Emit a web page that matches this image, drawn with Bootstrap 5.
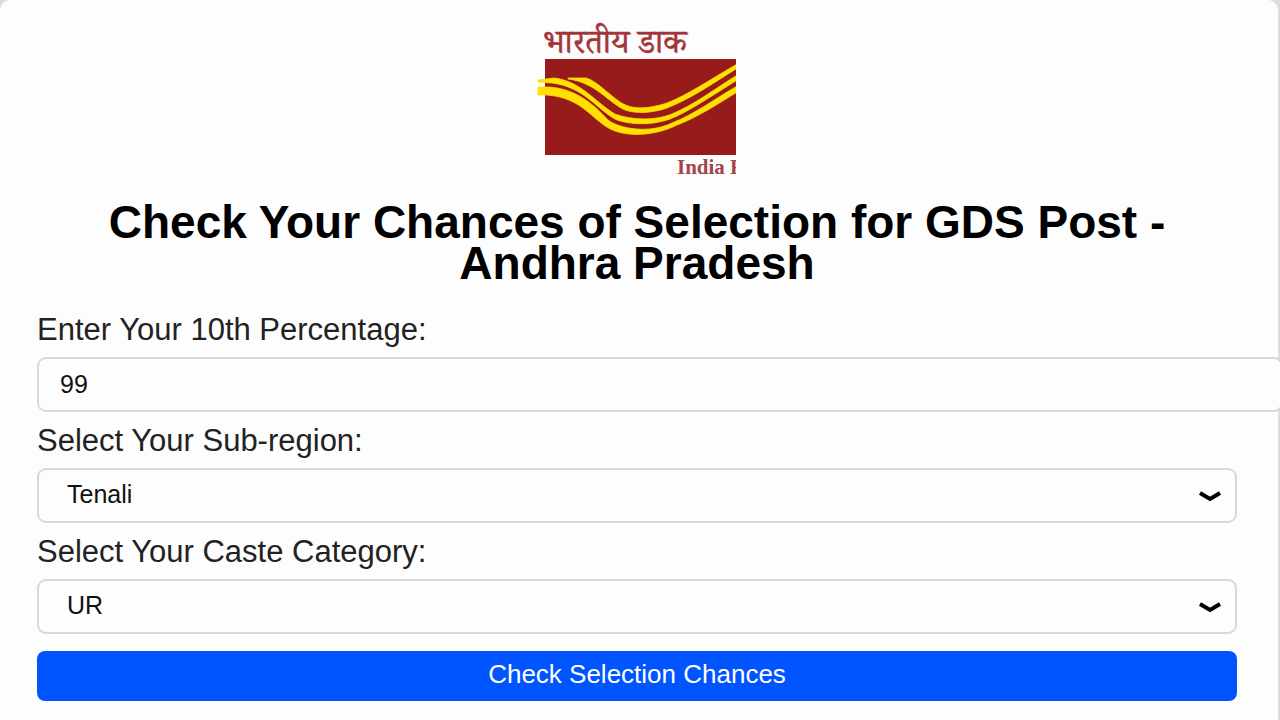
<!DOCTYPE html>
<html lang="en">
<head>
<meta charset="utf-8">
<meta name="viewport" content="width=device-width, initial-scale=1">
<title>GDS Post Selection Chances</title>
<link rel="stylesheet" href="https://cdn.jsdelivr.net/npm/bootstrap@5.3.0/dist/css/bootstrap.min.css">
<style>
body { background: #dcdcdc; font-family: "Liberation Sans", Arial, sans-serif; color: #222; }
.panel { background: #fdfdfd; border-radius: 10px 10px 0 0; min-height: 100vh; margin-right: 2px; padding: 28px 41px 19px 37px; }
.logo { width: 200px; height: 148px; overflow: visible; }
h1 { font-size: 46px; line-height: 41px; font-weight: 700; color: #000; margin: 26px 0 29px; }
.form-label { display: block; font-size: 31px; line-height: 34px; margin: 0 0 10px; }
.field { height: 55px; font-size: 25px; line-height: 30px; color: #111; border: 2px solid #d8d8d8; border-radius: 9px; background-color: #fdfdfd; margin-bottom: 12px; }
/* the text box keeps its padding outside its width, so it runs past the panel */
.field.score { box-sizing: content-box; height: 31px; padding: 10px 21px; }
.form-select.field { padding: 8px 60px 12px 28px; background-position: right 13px center; background-size: 24px 24px; background-image: url("data:image/svg+xml,%3Csvg xmlns='http://www.w3.org/2000/svg' viewBox='0 0 24 24'%3E%3Cpath d='M2 9L12 15L22 9' fill='none' stroke='%23000' stroke-width='4'/%3E%3C/svg%3E"); }
.btn-check-now { height: 50px; font-size: 26px; line-height: 30px; padding: 8px 12px 12px; color: #fff; background: #0055ff; border: 0; border-radius: 8px; margin-top: 17px; }
.btn-check-now:hover { background: #0048dd; color: #fff; }
</style>
</head>
<body class="overflow-x-hidden">
<main class="panel">
  <div class="text-center">
    <svg class="logo d-block mx-auto" viewBox="0 0 200 148" role="img" aria-label="India Post">
      <text x="6" y="25" font-family="'Noto Serif Devanagari','Noto Sans Devanagari',serif" font-size="33" fill="#a3353a" stroke="#a3353a" stroke-width="0.500">भारतीय डाक</text>
      <rect x="8" y="31" width="191" height="96" fill="#981b1b"/>
      <svg width="199" height="148">
        <g fill="#ffe000" stroke="#ffe000" stroke-width="0.800">
          <path d="M31 50H49C60 53 71 66 83 74C92 80 105 83 130 75C151 67 172 52 202 35V39C175 56 153 71 130 80C116 85 99 86 88 82C72 75 58 54 31 51Z"/>
          <path d="M1 52L17 50C44 53 59 75 78 86C91 91 115 94 135 86C157 77 179 60 202 46V51C179 65 159 79 140 88C122 97 98 98 80 92C61 83 48 59 15 55L1 54Z"/>
          <path d="M1 59H12C40 61 57 77 71 92C83 101 112 106 135 95C158 86 179 70 202 57V63C179 77 161 89 140 97C120 107 95 109 78 103C56 95 48 70 10 67H1Z"/>
        </g>
        <text x="140" y="146" font-family="'Liberation Serif',serif" font-weight="700" font-size="21" fill="#a3454a">India P</text>
      </svg>
    </svg>
    <h1>Check Your Chances of Selection for GDS Post - Andhra Pradesh</h1>
  </div>
  <form>
    <label class="form-label" for="score">Enter Your 10th Percentage:</label>
    <input class="form-control field score" type="text" inputmode="decimal" id="score" value="99">
    <label class="form-label" for="region">Select Your Sub-region:</label>
    <select class="form-select field" id="region"><option>Tenali</option></select>
    <label class="form-label" for="caste">Select Your Caste Category:</label>
    <select class="form-select field" id="caste"><option>UR</option></select>
    <button class="btn btn-check-now w-100 d-block" type="button">Check Selection Chances</button>
  </form>
</main>
<script src="https://cdn.jsdelivr.net/npm/bootstrap@5.3.0/dist/js/bootstrap.bundle.min.js"></script>
</body>
</html>
